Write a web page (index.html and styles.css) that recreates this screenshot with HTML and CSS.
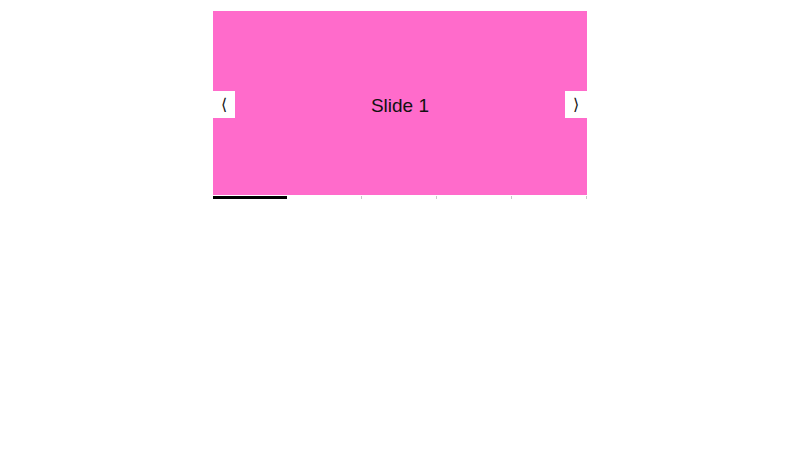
FILE: index.html
```html
<!DOCTYPE html>
<html lang="en">
<head>
    <meta charset="UTF-8">
    <meta name="viewport" content="width=device-width, initial-scale=1.0">
    <title>Carousel</title>
    <link rel="stylesheet" href="styles.css">
</head>
<body>

<div class="carousel">
    <div class="slides">
        <button class="nav-button prev" aria-label="Previous">&#10216;</button>
        <div class="slide">Slide 1</div>
        <button class="nav-button next" aria-label="Next">&#10217;</button>
    </div>

    <div class="progress">
        <div class="progress-step active"></div>
        <div class="progress-step"></div>
        <div class="progress-step"></div>
        <div class="progress-step"></div>
        <div class="progress-step"></div>
    </div>
</div>

</body>
</html>
```

FILE: styles.css
```css
body {
    font-family: 'Liberation Sans', Arial, sans-serif;
    background: white;
    margin: 0;
    padding: 11px 0 0 0;
}

.carousel {
    width: 374px;
    margin: 0 auto;
}

.slides {
    position: relative;
    height: 184px;
    background: #ff6bcb;
}

.slide {
    height: 100%;
    box-sizing: border-box;
    padding-top: 5px;
    display: flex;
    align-items: center;
    justify-content: center;
    font-size: 19px;
    color: #111;
}

.nav-button {
    position: absolute;
    top: 80px;
    width: 22px;
    height: 27px;
    background: white;
    border: none;
    padding: 0;
    font-family: 'DejaVu Sans', sans-serif;
    font-size: 16px;
    color: #111;
    cursor: pointer;
}

.prev {
    left: 0;
}

.next {
    right: 0;
}

.progress {
    display: flex;
    height: 3px;
    margin-top: 1px;
}

.progress-step {
    flex: 1;
    border-right: 1px solid #c8c8c8;
}

.progress-step.active {
    background: black;
    border-right: none;
}
```
